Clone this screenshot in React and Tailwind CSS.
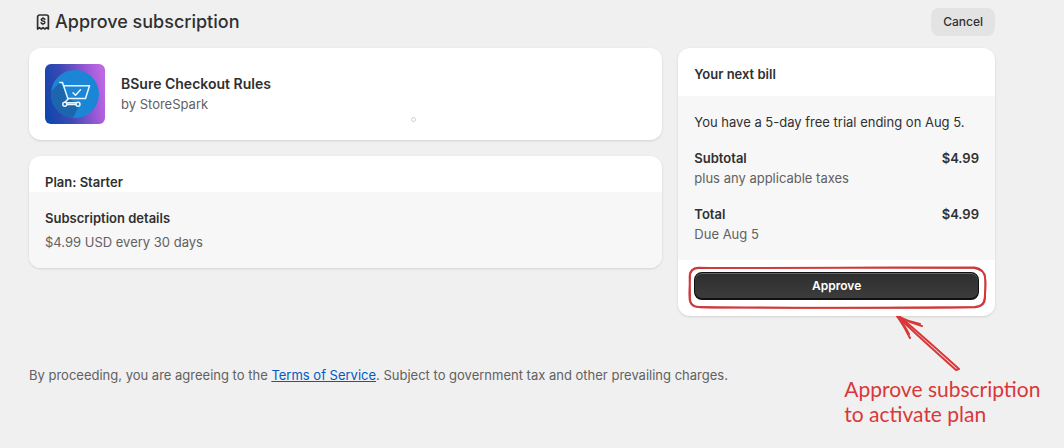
const bill = [
  { label: "Subtotal", amount: "$4.99", note: "plus any applicable taxes" },
  { label: "Total", amount: "$4.99", note: "Due Aug 5" },
];

function ReceiptIcon() {
  return (
    <svg className="w-5 h-5" viewBox="0 0 20 20" fill="none" stroke="#303030" strokeWidth="1.7" strokeLinecap="round" strokeLinejoin="round" aria-hidden="true">
      <path d="M4.600 17V5a2 2 0 0 1 2-2h6.800a2 2 0 0 1 2 2v12l-1.800-1.400-1.800 1.400-1.800-1.400-1.800 1.400-1.800-1.400z" />
      <path d="M11.900 7.400c-.3-.6-.9-.9-1.900-.9-1.100 0-1.800.5-1.800 1.200 0 1.900 3.700.8 3.700 2.700 0 .8-.8 1.300-1.900 1.300-1 0-1.700-.4-1.900-1M10 5.700v.8M10 11.700v.8" strokeWidth="1.500" />
    </svg>
  );
}

function AppLogo() {
  return (
    <svg className="w-[60px] h-[60px] shrink-0 rounded-md" viewBox="0 0 60 60" fill="none" aria-hidden="true">
      <defs>
        <linearGradient id="logo-bg" x1="0" y1="0.6" x2="1" y2="0.4">
          <stop offset="0" stopColor="#1046ad" />
          <stop offset="0.35" stopColor="#3c49b4" />
          <stop offset="0.8" stopColor="#a05bd8" />
          <stop offset="1" stopColor="#bd68e2" />
        </linearGradient>
        <clipPath id="logo-circle">
          <circle cx="30" cy="30" r="24" />
        </clipPath>
      </defs>
      <rect width="60" height="60" fill="url(#logo-bg)" />
      <circle cx="30" cy="30" r="24" fill="#1c86d6" />
      <path d="M15 18.500 0 33v27h25l9-18 -10-8z" fill="#1b66ac" clipPath="url(#logo-circle)" />
      <g stroke="#e6f6ff" strokeWidth="1.500" strokeLinecap="round" strokeLinejoin="round">
        <path d="M14.800 18.500h2.700l5.300 16h17.700L44.500 21.800H19" />
        <path d="M23.500 34.500l-3.500 3.800M22 40.500h9M22 38.800h9" />
        <circle cx="19.800" cy="40.300" r="2" />
        <circle cx="33" cy="40.300" r="2" />
        <path d="M28 28.800l2.500 2.500 5-5.500" />
      </g>
    </svg>
  );
}

// hand drawn frame, stretches with the button it surrounds
function Highlight() {
  return (
    <svg
      className="absolute -left-1.5 -top-1.5 w-[calc(100%+14px)] h-[calc(100%+16px)] pointer-events-none"
      viewBox="0 0 299 44"
      preserveAspectRatio="none"
      fill="none"
      stroke="#d0393b"
      strokeLinecap="round"
      aria-hidden="true"
    >
      <path d="M11 2C90 1 200 2 287 1.500c7 1 10 5 10.500 11 .500 7 0 13-.500 20-1 6-4 8-10 8.500C200 43 90 41.500 11 41 4 41 1.500 37 1.500 31 1 24 2 18 2 11 2 5 5 2 11 2z" strokeWidth="1.900" />
      <path d="M10 1.500C80 2.500 210 1 286 2c7 1.500 12 4 11.500 10 1 6 0 14 0 20 0 6-4 9-10 9.500C210 41 80 42.500 12 41.500 5 41 2 38 2 32 2.500 24 1.500 18 1.500 12 1 5 5 2 10 1.500z" strokeWidth="1.600" />
    </svg>
  );
}

function Note() {
  return (
    <div className="absolute left-[166px] top-full w-[210px] text-[#d8383a] pointer-events-none">
      <svg className="ml-[52px] w-[68px] h-[60px]" viewBox="0 0 68 60" fill="none" stroke="currentColor" strokeWidth="2" strokeLinecap="round" strokeLinejoin="round" aria-hidden="true">
        <path d="M1 0C22 20 41 37 60 54M3 0c20 17 39 34 60 53M60 54l3-1" />
        <path d="M1 0c5 7 9 14 13 22M3 1c4 7 8 13 10 17" />
        <path d="M1 0c8 4 15 7 25 10M3 1c8 4 15 6 21 7" />
      </svg>
      <p className="text-[21px] leading-[25px] whitespace-nowrap font-['Excalifont','Comic_Sans_MS',Lato,cursive]">
        Approve subscription
        <br />
        to activate plan
      </p>
    </div>
  );
}

export default function App() {
  return (
    <div className="min-h-screen bg-[#f0f0f0] pt-2 pb-4 pl-[29px] pr-[69px] font-[Inter,sans-serif] text-[13px] leading-5 text-[#303030]">
      <header className="flex items-center justify-between mb-3">
        <div className="flex items-center gap-0.5 pl-1">
          <ReceiptIcon />
          <h1 className="text-lg leading-7 font-[550]">Approve subscription</h1>
        </div>
        <button type="button" className="h-7 px-3 rounded-lg bg-[#e3e3e3] text-xs font-medium">
          Cancel
        </button>
      </header>

      <main className="grid grid-cols-[2fr_1fr] items-start gap-4">
        <div className="flex flex-col gap-4">
          <section className="relative flex items-center gap-4 p-4 rounded-xl bg-white shadow-sm">
            <AppLogo />
            <div className="grow">
              <h2 className="text-sm leading-5 font-semibold">BSure Checkout Rules</h2>
              <p className="text-[#616161]">by StoreSpark</p>
            </div>
            {/* pointer mark */}
            <span className="absolute left-[382px] bottom-[18px] size-[5px] rounded-full border border-[#cfcfcf]" />
          </section>

          <section className="rounded-xl bg-white shadow-sm overflow-hidden">
            <h2 className="px-4 pt-4 font-semibold">Plan: Starter</h2>
            <div className="p-4 bg-[#f7f7f7]">
              <h3 className="font-semibold">Subscription details</h3>
              <p className="mt-1 text-[#616161]">$4.99 USD every 30 days</p>
            </div>
          </section>
        </div>

        <section className="relative rounded-xl bg-white shadow-sm">
          <h2 className="px-4 pt-4 pb-3 font-semibold">Your next bill</h2>
          <div className="flex flex-col gap-4 p-4 bg-[#f7f7f7]">
            <p>You have a 5-day free trial ending on Aug 5.</p>
            {bill.map((row) => (
              <div key={row.label}>
                <div className="flex justify-between font-semibold">
                  <span>{row.label}</span>
                  <span>{row.amount}</span>
                </div>
                <p className="text-[#616161]">{row.note}</p>
              </div>
            ))}
          </div>
          <div className="px-4 pt-3 pb-4">
            <div className="relative">
              <button
                type="button"
                className="block w-full h-7 rounded-lg border border-b-2 border-[#111] bg-linear-to-b from-[#2e2e2e] to-[#3c3c3c] text-xs font-semibold text-white shadow-[inset_0_1px_0_#666]"
              >
                Approve
              </button>
              <Highlight />
            </div>
          </div>
          <Note />
        </section>
      </main>

      <footer className="mt-[49px] text-[#616161]">
        By proceeding, you are agreeing to the{" "}
        <a href="#terms" className="text-[#005bc4] underline">
          Terms of Service
        </a>
        . Subject to government tax and other prevailing charges.
      </footer>
    </div>
  );
}
